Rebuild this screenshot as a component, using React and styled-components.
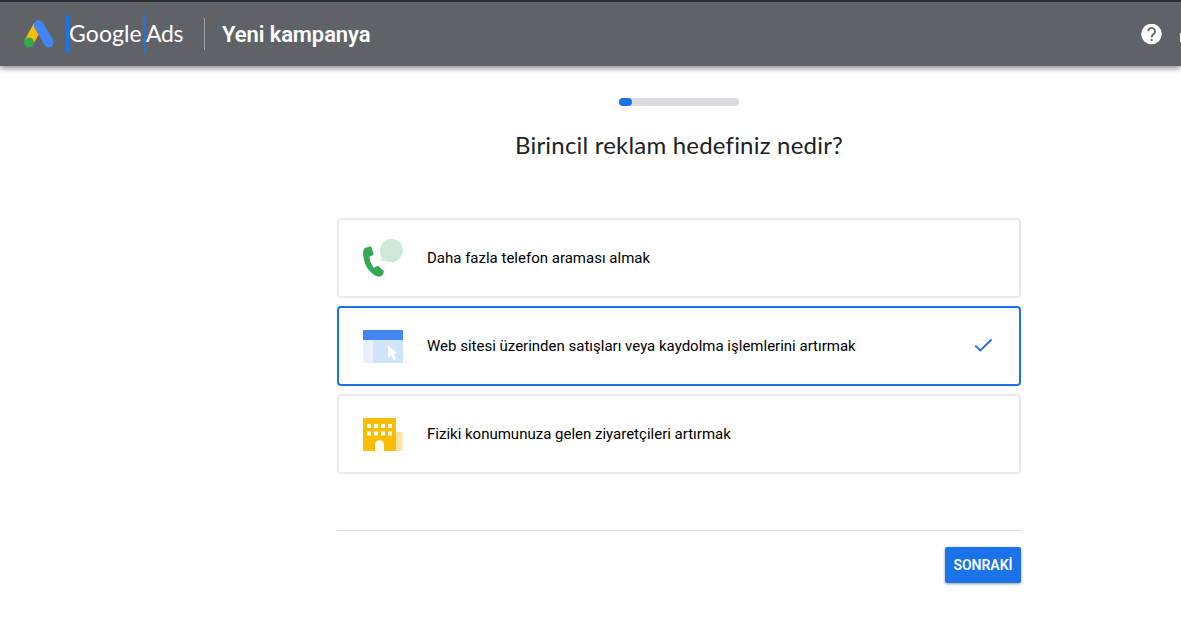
import React, { useState } from "react";

import styled, { createGlobalStyle } from "styled-components";

const GlobalStyle = createGlobalStyle`
  * {
    box-sizing: border-box;
  }

  html,
  body {
    margin: 0;
    height: 100%;
    overflow: hidden;
    background: #fff;
  }

  body {
    font-family: Roboto, sans-serif;
    color: #000;
  }
`;

const Page = styled.div`
  width: 100%;
`;

const HeaderBar = styled.header`
  display: flex;
  align-items: center;
  height: 66px;
  padding-left: 23px;
  border-top: 2px solid #2d2e30;
  background: #5f6368;
  color: #fff;
  box-shadow: 0 2px 6px rgba(0, 0, 0, 0.5);
`;

const Logo = styled.svg`
  flex: none;
  width: 32px;
  height: 28px;
  margin-top: -1px;
`;

const Brand = styled.div`
  display: flex;
  width: 149px;
  height: 38px;
  padding-left: 11px;
`;

const BrandWord = styled.span`
  width: ${props => props.$width}px;
  border-left: 3px solid #1a73e8;
  font: 400 23px/36px Lato, sans-serif;
  letter-spacing: ${props => props.$spacing}px;
  white-space: nowrap;
`;

const HeaderTitle = styled.h1`
  flex: 1;
  height: 32px;
  margin: 0;
  padding-left: 17px;
  border-left: 1px solid #9aa0a6;
  font-size: 22px;
  font-weight: 600;
  line-height: 33px;
  letter-spacing: -0.1px;
`;

const HelpIcon = styled.svg`
  width: 21px;
  height: 21px;
`;

const NoticeMark = styled.span`
  width: 1px;
  height: 9px;
  margin: 7px 0 0 18px;
  background: #fff;
`;

const Main = styled.main`
  width: 684px;
  margin-left: 337px;
  padding-top: 32px;
`;

const ProgressTrack = styled.div`
  width: 120px;
  height: 8px;
  margin: 0 auto;
  border-radius: 4px;
  background: #dadce0;
`;

const ProgressValue = styled.div`
  width: 13px;
  height: 8px;
  border-radius: 4px;
  background: #1a73e8;
`;

const Question = styled.h2`
  margin: 23px 0 57px;
  color: #202124;
  font: 400 24px/32px Lato, sans-serif;
  letter-spacing: 0.2px;
  text-align: center;
  white-space: nowrap;
`;

const GoalList = styled.div`
  display: flex;
  flex-direction: column;
  gap: 8px;
`;

const GoalCard = styled.button`
  display: flex;
  align-items: center;
  height: 80px;
  padding: 0 24px;
  border: 2px solid ${props => (props.$selected ? "#1a73e8" : "#e8eaed")};
  border-radius: 4px;
  background: #fff;
  color: #000;
  font: 400 15px/20px Roboto, sans-serif;
  text-align: left;
  cursor: pointer;
`;

const GoalIcon = styled.svg`
  flex: none;
  width: 40px;
  height: 40px;
  margin-right: 24px;
`;

const GoalText = styled.span`
  flex: 1;
  margin-top: -1px;
`;

const CheckIcon = styled.svg`
  width: 24px;
  height: 24px;
`;

const Footer = styled.footer`
  display: flex;
  justify-content: flex-end;
  margin-top: 56px;
  padding-top: 16px;
  border-top: 1px solid #dadce0;
`;

const NextButton = styled.button`
  width: 76px;
  height: 36px;
  padding: 0;
  border: 0;
  border-radius: 2px;
  background: #1a73e8;
  color: #fff;
  font: 600 14px/36px Roboto, sans-serif;
  box-shadow: 0 1px 3px rgba(0, 0, 0, 0.4);
  cursor: pointer;
`;

const AdsLogo = () => (
  <Logo viewBox="0 0 32 28">
    <path d="M15.3 5.3 5.8 22.3" stroke="#fbbc04" strokeWidth="9.6" />
    <path
      d="M15.7 5.2 25.7 22.4"
      stroke="#4285f4"
      strokeWidth="9.8"
      strokeLinecap="round"
    />
    <circle cx="6.1" cy="22.5" r="5" fill="#34a853" />
  </Logo>
);

const PhoneIcon = () => (
  <GoalIcon viewBox="0 0 40 40">
    <circle cx="28.4" cy="12.5" r="11.5" fill="#ceead6" />
    <path d="m18.900 18-.9 5.300 6.800-1.200Z" fill="#ceead6" />
    <path
      d="M6.8 8.4 2 10C.1 11-.1 14.3.3 18c1 9.700 7.200 18.200 13.700 20.300 2.300.6 4.800 0 6.100-2.100l.7-2.100c.2-.6 0-1.100-.5-1.500l-4.500-4.100c-.5-.5-1.200-.5-1.800-.2l-3.200 1.500c-2.300-2.900-4.200-7.200-4.300-11l3.200-1.500c.7-.3 1-1 .9-1.700L8.300 9.300c-.2-.8-.8-1.100-1.500-.9Z"
      fill="#34a853"
    />
  </GoalIcon>
);

const WebsiteIcon = () => (
  <GoalIcon viewBox="0 0 40 40">
    <path d="M0 14h10v23H0z" fill="#e8f0fe" />
    <path d="M10 14h30v23H10z" fill="#d2e3fc" />
    <path d="M0 4h40v10H0z" fill="#4285f4" />
    <path
      d="M25 19v13l3.200-2.700 2.400 4.900 2.800-1.300-2.300-4.900 3.300-.5Z"
      fill="#fff"
    />
  </GoalIcon>
);

const StoreIcon = () => (
  <GoalIcon viewBox="0 0 40 40">
    <path d="M33 18h6.600v19H33z" fill="#fde3a4" />
    <path d="M0 4h33v33H0z" fill="#fbbc04" />
    {[4, 11, 18, 25].map(x => (
      <path key={x} d={`M${x} 10h4v4h-4zM${x} 17.500h4v4h-4z`} fill="#fff" />
    ))}
    <path d="M12 37v-6.200a4.500 4.500 0 0 1 9 0V37Z" fill="#fff" />
  </GoalIcon>
);

const goals = [
  { id: "calls", Icon: PhoneIcon, text: "Daha fazla telefon araması almak" },
  {
    id: "website",
    Icon: WebsiteIcon,
    text: "Web sitesi üzerinden satışları veya kaydolma işlemlerini artırmak"
  },
  {
    id: "store",
    Icon: StoreIcon,
    text: "Fiziki konumunuza gelen ziyaretçileri artırmak"
  }
];

const Header = () => (
  <HeaderBar>
    <AdsLogo />
    <Brand>
      <BrandWord $width={77} $spacing={0.1}>
        Google
      </BrandWord>
      <BrandWord $width={50} $spacing={-0.4}>
        Ads
      </BrandWord>
    </Brand>
    <HeaderTitle>Yeni kampanya</HeaderTitle>
    <HelpIcon viewBox="0 0 21 21">
      <circle cx="10.5" cy="10" r="10.300" fill="#fff" />
      <path
        d="M7.200 7.300a3.400 3.400 0 1 1 5.700 2.500c-1.200 1.100-2.300 1.700-2.300 3.700"
        fill="none"
        stroke="#5f6368"
        strokeWidth="1.700"
      />
      <path d="M9.700 15h1.900v1.900H9.700z" fill="#5f6368" />
    </HelpIcon>
    <NoticeMark />
  </HeaderBar>
);

const App = () => {
  const [selected, setSelected] = useState("website");
  return (
    <Page>
      <GlobalStyle />
      <Header />
      <Main>
        <ProgressTrack>
          <ProgressValue />
        </ProgressTrack>
        <Question>Birincil reklam hedefiniz nedir?</Question>
        <GoalList>
          {goals.map(({ id, Icon, text }) => (
            <GoalCard
              key={id}
              $selected={selected === id}
              onClick={() => setSelected(id)}
            >
              <Icon />
              <GoalText>{text}</GoalText>
              {selected === id && (
                <CheckIcon viewBox="0 0 24 24">
                  <path
                    d="m4.300 11.600 5 4.900L20.500 5.500"
                    fill="none"
                    stroke="#2a68d8"
                    strokeWidth="1.900"
                  />
                </CheckIcon>
              )}
            </GoalCard>
          ))}
        </GoalList>
        <Footer>
          <NextButton>SONRAKİ</NextButton>
        </Footer>
      </Main>
    </Page>
  );
};

export default App;
